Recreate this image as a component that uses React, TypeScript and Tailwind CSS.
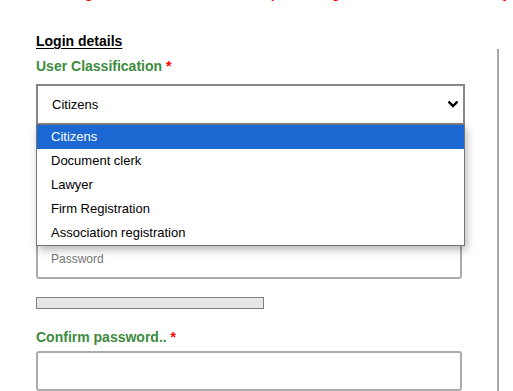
import React from "react";

const options = [
  "Citizens",
  "Document clerk",
  "Lawyer",
  "Firm Registration",
  "Association registration",
];

function Chevron() {
  return (
    <svg width="10" height="7" viewBox="0 0 10 7" className="block">
      <polyline
        points="1.3,1.3 5,5 8.7,1.3"
        fill="none"
        stroke="#000"
        strokeWidth="2.4"
        strokeLinecap="square"
      />
    </svg>
  );
}

export default function App() {
  return (
    <div
      className="relative w-[513px] h-[391px] overflow-hidden bg-white"
      style={{ fontFamily: '"Liberation Sans", Arial, sans-serif' }}
    >
      <div className="flex h-full">
        <div className="w-[497px] shrink-0 pl-[36px]">
          {/* clipped red note line */}
          <div className="-mt-[13px] h-[13px] whitespace-nowrap text-[13px] leading-[13px] font-bold text-[#ff0000]">
            <span className="inline-block w-[57px] text-right">Using</span>
            <span className="inline-block w-[186px] text-right">up</span>
            <span className="inline-block w-[61px] text-right">big</span>
            <span className="inline-block w-[170px] text-right">by</span>
          </div>

          <div className="mt-[33px] text-[14px] leading-[16px] font-bold text-black underline underline-offset-[2px]">
            Login details
          </div>
          <div className="mt-[9px] text-[14px] leading-[16px] font-bold text-[#3d8b3d]">
            User Classification <span className="text-[#ff0000]">*</span>
          </div>

          <div className="relative mt-[10px] w-[429px]">
            <div className="h-[41px] border-2 border-[#878787] flex items-center justify-between pl-[14px] pr-[5px] text-[13px] text-black bg-white">
              <span>Citizens</span>
              <Chevron />
            </div>
            <div className="absolute left-0 top-[40px] z-10 w-[429px] border border-[#767676] bg-white shadow-[2px_4px_8px_rgba(0,0,0,0.28)]">
              {options.map((o, i) => (
                <div
                  key={o}
                  className={
                    "h-[24px] flex items-center pl-[14px] text-[13px] " +
                    (i === 0 ? "bg-[#1b68d3] text-white" : "text-black")
                  }
                >
                  {o}
                </div>
              ))}
            </div>
          </div>

          <div className="mt-[92px] text-[14px] leading-[16px] font-bold text-[#3d8b3d]">
            Password <span className="text-[#ff0000]">*</span>
          </div>
          <div className="mt-[6px] w-[426px] h-[40px] border-2 border-[#ababab] rounded-[3px] flex items-center pl-[13px] text-[12px] text-[#757575]">
            Password
          </div>

          <div className="mt-[18px] w-[228px] h-[12px] border border-[#808080] bg-[#e6e6e6]" />

          <div className="mt-[20px] text-[14px] leading-[16px] font-bold text-[#3d8b3d]">
            Confirm password.. <span className="text-[#ff0000]">*</span>
          </div>
          <div className="mt-[6px] w-[426px] h-[40px] border-2 border-[#ababab] rounded-[3px]" />
        </div>
        <div className="mt-[49px] w-[2px] bg-[#a9a9a9] self-stretch" />
      </div>
    </div>
  );
}
